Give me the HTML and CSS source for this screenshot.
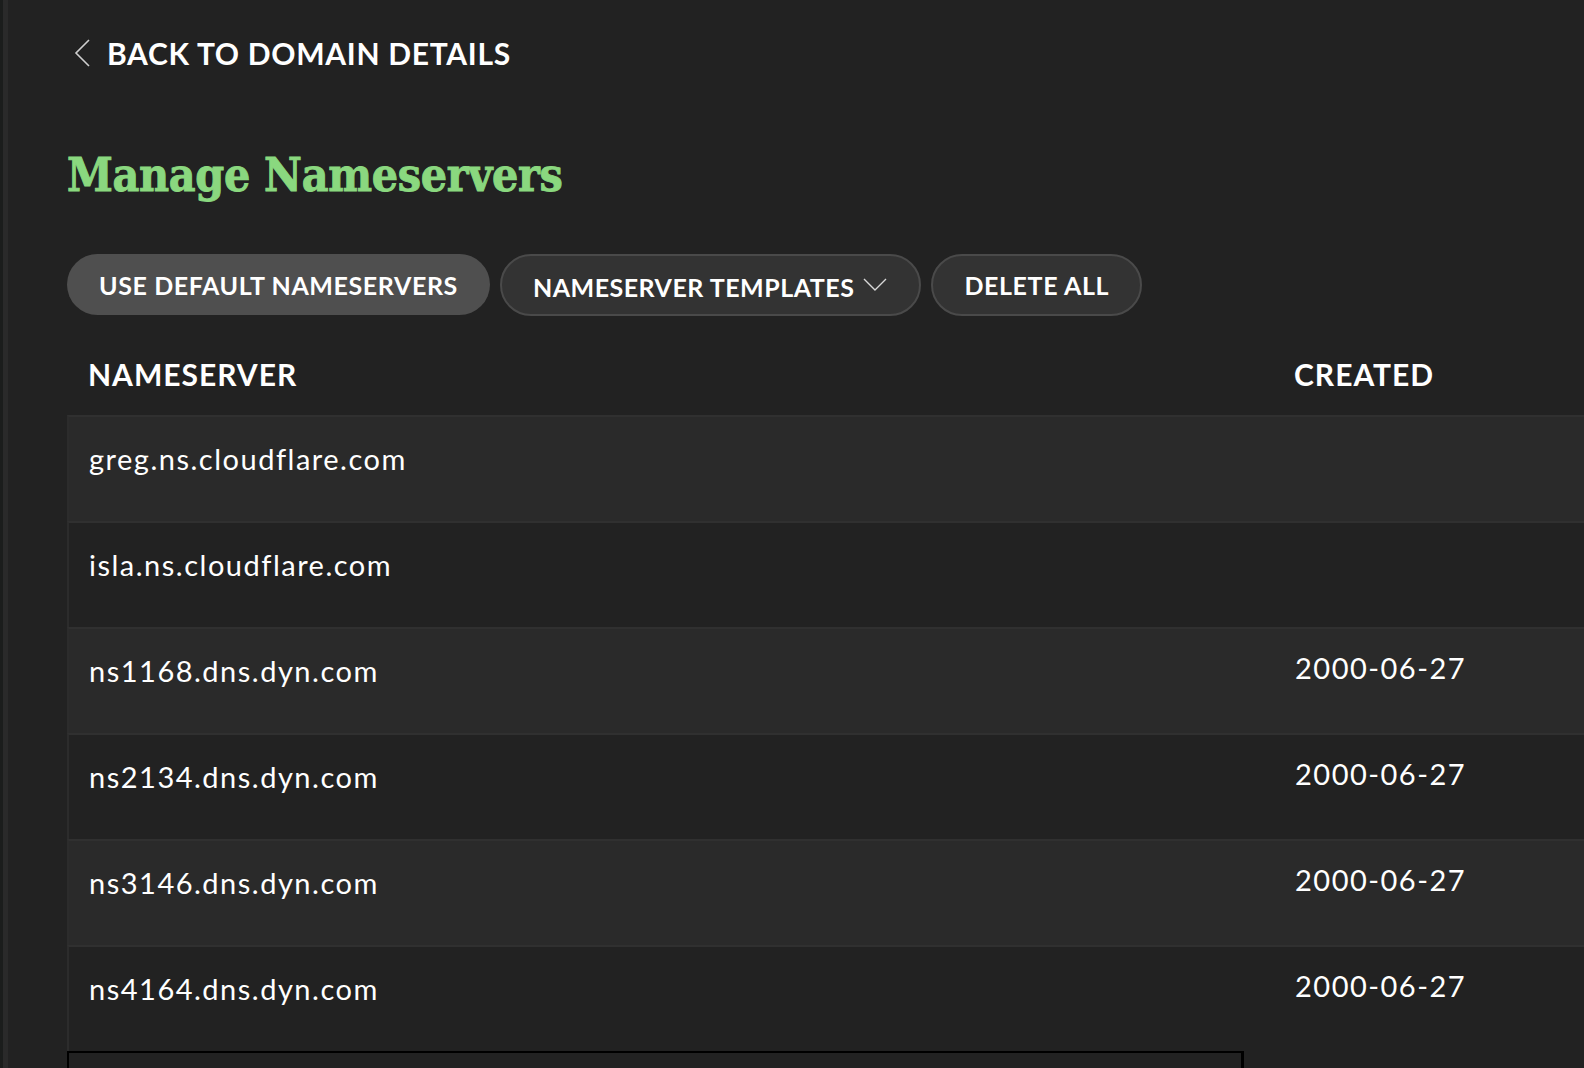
FILE: index.html
```html
<!DOCTYPE html>
<html lang="en">
<head>
    <meta charset="UTF-8">
    <meta name="viewport" content="width=device-width, initial-scale=1.0">
    <title>Manage Nameservers</title>
    <link rel="stylesheet" href="styles.css">
</head>
<body>
    <div class="rail"></div>
    <div class="main">
        <a class="back-link" href="#">
            <svg class="back-icon" width="18" height="28" viewBox="0 0 18 28"><path d="M16 1 L3 14 L16 27" fill="none" stroke="#cfcfcf" stroke-width="1.6"/></svg>
            <span>BACK TO DOMAIN DETAILS</span>
        </a>

        <h1>Manage Nameservers</h1>

        <div class="actions">
            <button class="pill pill-filled">USE DEFAULT NAMESERVERS</button>
            <button class="pill pill-outline pill-menu">NAMESERVER TEMPLATES
                <svg width="24" height="14" viewBox="0 0 24 14"><path d="M1 1 L12 12 L23 1" fill="none" stroke="#d8d8d8" stroke-width="1.4"/></svg>
            </button>
            <button class="pill pill-outline">DELETE ALL</button>
        </div>

        <div class="table">
            <div class="table-head">
                <div class="col-name">NAMESERVER</div>
                <div class="col-date">CREATED</div>
            </div>
            <div class="row">
                <div class="col-name">greg.ns.cloudflare.com</div>
                <div class="col-date"></div>
            </div>
            <div class="row">
                <div class="col-name">isla.ns.cloudflare.com</div>
                <div class="col-date"></div>
            </div>
            <div class="row">
                <div class="col-name">ns1168.dns.dyn.com</div>
                <div class="col-date">2000-06-27</div>
            </div>
            <div class="row">
                <div class="col-name">ns2134.dns.dyn.com</div>
                <div class="col-date">2000-06-27</div>
            </div>
            <div class="row">
                <div class="col-name">ns3146.dns.dyn.com</div>
                <div class="col-date">2000-06-27</div>
            </div>
            <div class="row">
                <div class="col-name">ns4164.dns.dyn.com</div>
                <div class="col-date">2000-06-27</div>
            </div>
        </div>

        <div class="add-box"></div>
    </div>
</body>
</html>
```

FILE: styles.css
```css
html {
    overflow: hidden;
}
body {
    margin: 0;
    height: 100vh;
    background-color: #222222;
    color: #ffffff;
    font-family: Lato, "Open Sans", sans-serif;
    display: flex;
    overflow: hidden;
}
.rail {
    width: 3px;
    flex-shrink: 0;
    background-color: #1b1d1c;
    border-right: 5px solid #2a2a2a;
}
.main {
    flex: 1;
    height: 100vh;
    box-sizing: border-box;
    overflow: hidden;
    padding: 34px 0 0 59px;
    min-width: 0;
}
.back-link {
    display: flex;
    align-items: center;
    gap: 16px;
    color: #ffffff;
    text-decoration: none;
    font-weight: 700;
    font-size: 30px;
    letter-spacing: 0.7px;
    margin-left: 6px;
    height: 38px;
}
.back-icon {
    flex-shrink: 0;
}
h1 {
    margin: 75px 0 0 0;
    font-family: "DejaVu Serif", serif;
    font-stretch: condensed;
    font-weight: 700;
    font-size: 46px;
    letter-spacing: -0.3px;
    color: #8ad87f;
    -webkit-text-stroke: 0.9px #8ad87f;
    line-height: 56px;
}
.actions {
    display: flex;
    gap: 10px;
    margin-top: 51px;
}
.pill {
    font-family: Lato, "Open Sans", sans-serif;
    font-weight: 700;
    font-size: 25px;
    letter-spacing: 0.6px;
    color: #ffffff;
    border-radius: 32px;
    height: 62px;
    padding: 0 32px;
    cursor: pointer;
    display: flex;
    align-items: center;
}
.pill-filled {
    background-color: #4f4f4f;
    border: none;
    height: 61px;
}
.pill-outline {
    background-color: #333333;
    border: 2px solid #4a4a4a;
    padding: 0 31px;
}
.pill-menu {
    gap: 9px;
    padding-top: 4px;
    padding-right: 32px;
    letter-spacing: 0.5px;
}
.pill-menu svg {
    margin-top: -4px;
}
.table {
    margin-top: 26px;
}
.table-head {
    display: flex;
    font-weight: 700;
    font-size: 30px;
    letter-spacing: 1px;
    height: 73px;
    padding-top: 14px;
    box-sizing: border-box;
}
.col-name {
    flex-shrink: 0;
}
.table-head .col-name {
    width: 1206px;
    padding-left: 21px;
}
.row {
    display: flex;
    height: 106px;
    box-sizing: border-box;
    border-top: 2px solid #303030;
    border-left: 2px solid #2c2c2c;
    font-size: 29px;
    letter-spacing: 1.5px;
    padding-top: 24px;
}
.row:nth-child(even) {
    background-color: #2a2a2a;
}
.row .col-name {
    width: 1206px;
    padding-left: 20px;
}
.col-date {
    flex: 1;
}
.row .col-date {
    margin-top: -3px;
}
.add-box {
    width: 1172px;
    height: 60px;
    border: 2px solid #000000;
    border-right-width: 3px;
    background-color: #222222;
}
```
